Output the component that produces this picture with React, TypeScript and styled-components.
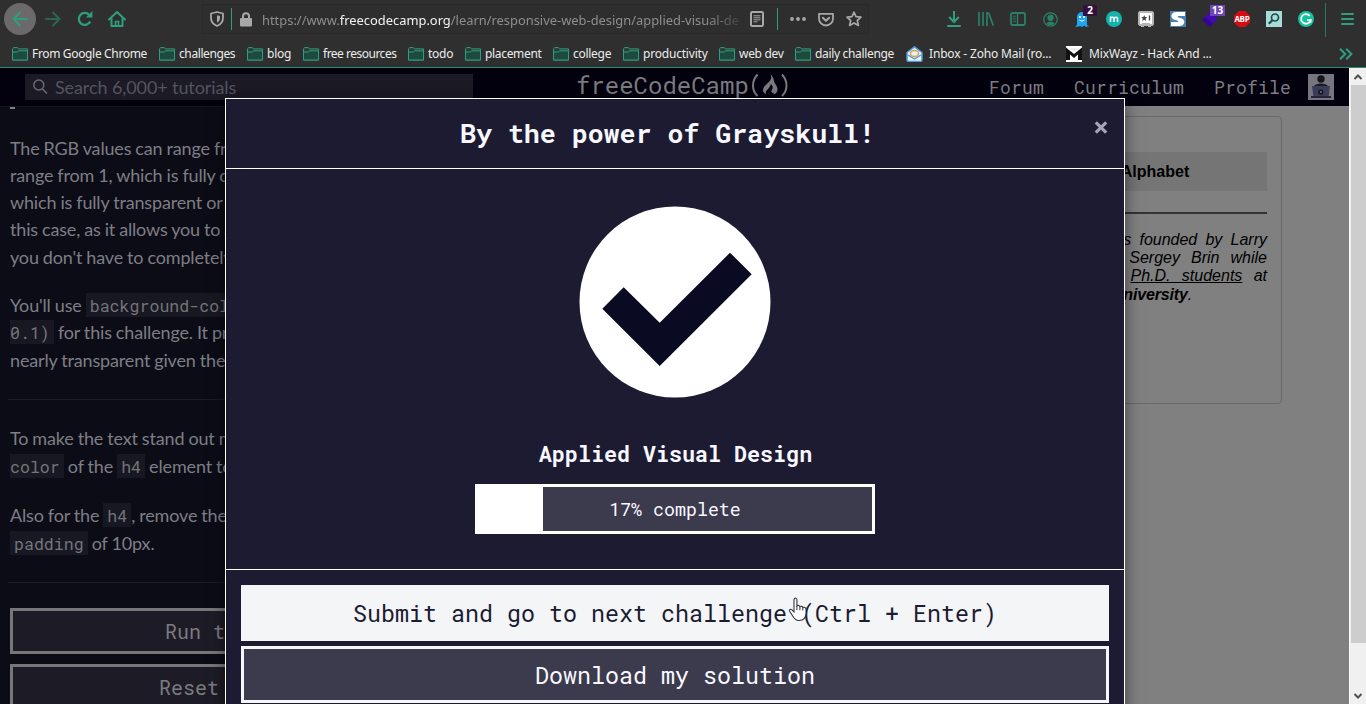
import React from 'react';
import styled, { createGlobalStyle, css } from 'styled-components';

const mono = '"Roboto Mono", "DejaVu Sans Mono", "Liberation Mono", monospace';
const ui = '"Noto Sans", "Open Sans", sans-serif';
const teal = '#2f9e7f';

const Global = createGlobalStyle`
  * { box-sizing: border-box; }
  body { margin: 0; background: #050511; }
`;

const Screen = styled.div`
  position: relative;
  width: 1366px;
  height: 704px;
  overflow: hidden;
  display: flex;
  flex-direction: column;
`;

/* ---------- browser chrome ---------- */
const Chrome = styled.header`
  height: 68px;
  flex: none;
  background: #2f2f2f;
  border-bottom: 1px solid #2c8a72;
  font-family: ${ui};
`;
const NavRow = styled.div`
  display: flex;
  align-items: center;
  height: 38px;
`;
const Slot = styled.div<{ $dim?: boolean }>`
  position: relative;
  width: 32px;
  height: 38px;
  flex: none;
  display: flex;
  align-items: center;
  justify-content: center;
  color: ${p => (p.$dim ? '#2b8069' : teal)};
  svg { display: block; }
`;
const BackButton = styled.div`
  width: 32px;
  height: 32px;
  margin: 0 1px 0 4px;
  border-radius: 50%;
  background: #6b6969;
  display: flex;
  align-items: center;
  justify-content: center;
`;
const UrlBar = styled.div`
  width: 667px;
  height: 30px;
  margin-left: 69px;
  border: 1px solid #2a2a2a;
  background: #2e2e2e;
  display: flex;
  align-items: center;
  color: #a3a3a3;
`;
const UrlIcon = styled.div<{ $w: number }>`
  width: ${p => p.$w}px;
  flex: none;
  display: flex;
  justify-content: center;
`;
const UrlDivider = styled.i`
  width: 1px;
  height: 22px;
  flex: none;
  background: ${teal};
`;
const UrlText = styled.div`
  width: 485px;
  margin-left: 3px;
  flex: none;
  white-space: nowrap;
  font-size: 12.9px;
  line-height: 20px;
  padding-top: 1px;
  color: #8e8e8e;
  mask-image: linear-gradient(to right, #000 445px, transparent 486px);
  b { font-weight: 400; color: #f2f2f2; }
`;
const Tools = styled.div`
  display: flex;
  margin-left: 69px;
`;
const Badge = styled.span<{ $bg: string; $x: number; $w: number }>`
  position: absolute;
  top: 5px;
  left: ${p => p.$x}px;
  width: ${p => p.$w}px;
  height: 11px;
  background: ${p => p.$bg};
  color: #fff;
  font: 700 10px/11px ${ui};
  text-align: center;
`;
const MenuDivider = styled.i`
  width: 1px;
  height: 34px;
  margin: 2px 5px 0 3px;
  background: #257a63;
`;
const Bookmarks = styled.div`
  display: flex;
  align-items: center;
  height: 29px;
  padding: 2px 0 0 12px;
`;
const Bookmark = styled.div<{ $w: number; $gap?: number; $ls?: number }>`
  width: ${p => p.$w}px;
  flex: none;
  display: flex;
  align-items: center;
  gap: ${p => p.$gap ?? 4}px;
  color: #ececec;
  font-size: 12px;
  line-height: 18px;
  letter-spacing: ${p => p.$ls ?? 0}px;
  white-space: nowrap;
  svg { flex: none; }
`;
const More = styled.div`
  width: 16px;
  margin-left: 127px;
`;

/* ---------- page ---------- */
const Viewport = styled.div`
  display: flex;
  flex: 1;
  min-height: 0;
`;
const Page = styled.div`
  width: 1349px;
  display: flex;
  flex-direction: column;
  background: #050511;
`;
const SiteNav = styled.nav`
  height: 38px;
  flex: none;
  display: flex;
  align-items: center;
  background: #03010e;
`;
const Search = styled.div`
  width: 448px;
  height: 26px;
  margin-left: 25px;
  padding-left: 7px;
  display: flex;
  align-items: center;
  gap: 7px;
  background: #1b1a25;
  color: #54545e;
  font: 18px/26px Lato, sans-serif;
  letter-spacing: -0.1px;
`;
const Brand = styled.div`
  width: 214px;
  margin-left: 103px;
  padding-bottom: 5px;
  display: flex;
  align-items: center;
  color: #7b7b80;
  font: 24px/30px ${mono};
  letter-spacing: 0;
`;
const BrandMark = styled.svg`
  flex: none;
  margin-left: 1px;
`;
const NavLinks = styled.div`
  display: flex;
  gap: 30px;
  margin-left: 199px;
  color: #7d7d84;
  font: 18px/26px ${mono};
  letter-spacing: 0.2px;
`;
const Avatar = styled.div`
  margin-left: 17px;
  width: 26px;
  height: 26px;
`;
const Split = styled.div`
  flex: 1;
  min-height: 0;
  display: flex;
`;
const Lesson = styled.section`
  width: 486px;
  flex: none;
  padding: 0 10px;
  background: #0c0c17;
  border-top: 1px solid #13131d;
  overflow: hidden;
  color: #7e7e84;
  font: 18px/27.3px Lato, sans-serif;
  letter-spacing: -0.16px;
  word-spacing: -0.4px;
  white-space: nowrap;
`;
const Para = styled.p<{ $loose?: boolean }>`
  margin: 0 0 21px;
  ${p => p.$loose && css`line-height: 28px;`}
`;
const Tail = styled.i`
  display: block;
  width: 5px;
  height: 2px;
  margin-bottom: 25.5px;
  background: #7e7e84;
`;
const Code = styled.code<{ $flush?: boolean }>`
  padding: 2px 4px 1px;
  ${p => p.$flush && css`padding-left: 0;`}
  background: #181822;
  color: #74747a;
  font: 16.6px/1 ${mono};
  letter-spacing: 0;
  word-spacing: 0;
`;
const Rule = styled.hr<{ $first?: boolean }>`
  height: 1px;
  margin: ${p => (p.$first ? '25.3px 0 24px -2px' : '25px 0 25px -2px')};
  border: 0;
  background: #1c1c27;
`;
const LessonButton = styled.button`
  display: block;
  width: 466px;
  height: 46px;
  margin-bottom: 10px;
  padding: 0;
  border: 3px solid #77777b;
  background: #1d1c26;
  color: #7b7b80;
  font: 20px/38px ${mono};
`;
const Preview = styled.section`
  flex: 1;
  display: flex;
  justify-content: flex-end;
  padding: 10px 67px 0 0;
  background: #808080;
`;
const Card = styled.div`
  width: 254px;
  height: 288px;
  padding: 35px 14px 0;
  border: 1px solid #696969;
  border-radius: 4px;
  color: #000;
  font: 16px/18px "Liberation Sans", sans-serif;
`;
const CardTitle = styled.h4`
  height: 39px;
  margin: 0 0 21px;
  background: #757575;
  font: 700 16px/39px "Liberation Sans", sans-serif;
  text-align: center;
`;
const CardRule = styled.div`
  height: 2px;
  margin-bottom: 17px;
  background: #333;
`;
const CardLine = styled.div<{ $last?: boolean }>`
  font-style: italic;
  white-space: nowrap;
  text-align-last: ${p => (p.$last ? 'left' : 'justify')};
  padding-top: ${p => (p.$last ? 1 : 0)}px;
  letter-spacing: ${p => (p.$last ? -0.15 : 0)}px;
`;
const Scrollbar = styled.div`
  width: 17px;
  display: flex;
  flex-direction: column;
  align-items: center;
  background: #f0f0f0;
  border-left: 1px solid #fafafa;
`;
const Arrow = styled.svg`
  flex: none;
  width: 16px;
  height: 17px;
`;
const Thumb = styled.div`
  width: 15px;
  height: 558px;
  margin-bottom: auto;
  background: #cdcdcd;
`;

/* ---------- dialog ---------- */
const Dialog = styled.div`
  position: absolute;
  top: 98px;
  left: 225px;
  width: 900px;
  height: 640px;
  border: 1px solid #fff;
  background: #1d1b32;
  box-shadow: 0 5px 15px rgba(0, 0, 0, 0.5);
  color: #f8f8ff;
  font-family: ${mono};
`;
const DialogHead = styled.div`
  height: 70px;
  display: flex;
  align-items: center;
  padding: 0 16px 0 15px;
  border-bottom: 1px solid #fff;
`;
const DialogTitle = styled.h2`
  flex: 1;
  margin: 0 0 2px;
  text-align: center;
  font: 700 26.6px/36px ${mono};
`;
const CloseIcon = styled.svg`
  flex: none;
  margin-bottom: 12px;
`;
const DialogBody = styled.div`
  height: 401px;
  padding-top: 37px;
  display: flex;
  flex-direction: column;
  align-items: center;
  border-bottom: 1px solid #fff;
`;
const BlockName = styled.div`
  margin: 42px 0 16px;
  padding-left: 1px;
  font: 700 21.7px/28px ${mono};
`;
const Progress = styled.div`
  position: relative;
  width: 400px;
  height: 50px;
  box-shadow: inset 0 0 0 3px #fff;
  background: #3c3a4d;
  font-size: 18.3px;
  line-height: 50px;
  text-align: center;
`;
const ProgressFill = styled.div`
  position: absolute;
  inset: 0 auto 0 0;
  background: #fff;
`;
const DialogFoot = styled.div`
  padding: 15px;
  display: flex;
  flex-direction: column;
  gap: 5px;
`;
const Action = styled.button<{ $active?: boolean }>`
  height: ${p => (p.$active ? 56 : 57)}px;
  padding: 0;
  border: 3px solid ${p => (p.$active ? '#f4f5f7' : '#f6f6fc')};
  background: ${p => (p.$active ? '#f4f5f7' : '#3c3a4d')};
  color: ${p => (p.$active ? '#1b1b32' : '#f8f8ff')};
  font: 23.33px/50px ${mono};
`;
const Pointer = styled.svg`
  position: absolute;
  left: 788px;
  top: 597px;
`;

const Folder = () => (
  <svg width="16" height="14" viewBox="0 0 16 14" fill="#1d4a3e" stroke="#2f9e7f" strokeWidth="1">
    <path d="M.5 13V1.8L1.8.6h3.4l1.5 1.3h8.8V13z" fill="#2a3d37" />
    <path d="M.5 13V5h4.7l1.5-1.2h8.8V13z" />
  </svg>
);

const folders: [string, number, number][] = [
  ['From Google Chrome', 147, -0.34],
  ['challenges', 88, -0.4],
  ['blog', 56, -0.25],
  ['free resources', 105, -0.5],
  ['todo', 57, -0.25],
  ['placement', 88, -0.33],
  ['college', 70, -0.28],
  ['productivity', 96, -0.2],
  ['web dev', 76, -0.3],
  ['daily challenge', 111, -0.33],
];

const s = { fill: 'none', stroke: 'currentColor', strokeWidth: 2 } as const;

const BrowserChrome = () => (
  <Chrome>
    <NavRow>
      <BackButton>
        <svg width="16" height="16" viewBox="0 0 16 16" fill="none" stroke={teal} strokeWidth="2" strokeLinecap="round"><path d="M15 8H1.5M8 1.5 1.5 8 8 14.5" /></svg>
      </BackButton>
      <Slot><svg width="16" height="16" viewBox="0 0 16 16" fill="none" stroke="#2b6654" strokeWidth="2" strokeLinecap="round"><path d="M1 8h13.5M8 1.5 14.5 8 8 14.5" /></svg></Slot>
      <Slot><svg width="16" height="16" viewBox="0 0 16 16" {...s} strokeWidth={2.3}><path d="M13.2 10.6A6 6 0 1 1 12 3.6" /><path d="M15.4 0v6.6H8.8z" fill="currentColor" stroke="none" /></svg></Slot>
      <Slot><svg width="18" height="16" viewBox="0 0 18 16" {...s}><path d="M1 8.5 9 1l8 7.5M3.5 7v8h11V7" strokeLinecap="round" strokeLinejoin="round" /><path d="M7.5 15v-4.5h3V15" strokeWidth="1.6" /></svg></Slot>
      <UrlBar>
        <UrlIcon $w={28}><svg width="14" height="16" viewBox="0 0 14 16" fill="none" stroke="#a8a8a8" strokeWidth="1.8"><path d="M7 1 13 2.5V7c0 4-2.5 6.5-6 8-3.5-1.5-6-4-6-8V2.5z" strokeLinejoin="round" /><path d="M7 4.2v7.6C9 10.5 10 9 10 7V4.9z" fill="#a8a8a8" stroke="none" /></svg></UrlIcon>
        <UrlDivider />
        <UrlIcon $w={27}><svg width="12" height="15" viewBox="0 0 12 15"><rect y="6" width="12" height="8.5" rx="1" fill="#a8a8a8" /><path d="M3 7V4.2a3 3 0 0 1 6 0V7" fill="none" stroke="#a8a8a8" strokeWidth="2" /></svg></UrlIcon>
        <UrlText>https://www.<b>freecodecamp.org</b>/learn/responsive-web-design/applied-visual-de</UrlText>
        <UrlIcon $w={20}><svg width="14" height="16" viewBox="0 0 14 16" fill="none" stroke="#a8a8a8"><rect x="1" y="1" width="12" height="14" rx="1.2" strokeWidth="2" /><path d="M3.5 4.8h7M3.5 6.8h7M3.5 8.8h7M3.5 10.8h4" strokeWidth="1" /></svg></UrlIcon>
        <UrlIcon $w={20}><UrlDivider /></UrlIcon>
        <UrlIcon $w={22}><svg width="16" height="4" viewBox="0 0 16 4" fill="#a8a8a8"><circle cx="2" cy="2" r="1.9" /><circle cx="8" cy="2" r="1.9" /><circle cx="14" cy="2" r="1.9" /></svg></UrlIcon>
        <UrlIcon $w={34}><svg width="16" height="15" viewBox="0 0 16 15" fill="none" stroke="#a8a8a8" strokeWidth="1.8" strokeLinecap="round" strokeLinejoin="round"><path d="M1 1.8h14V6.5a7 7 0 0 1-14 0z" /><path d="M4.8 5.8 8 8.8l3.2-3" strokeWidth="2" /></svg></UrlIcon>
        <UrlIcon $w={22}><svg width="16" height="16" viewBox="0 0 16 16" fill="none" stroke="#a8a8a8" strokeWidth="1.7" strokeLinejoin="round"><path d="m8 1.2 2 4.5 5 .5-3.7 3.3 1.1 4.9L8 11.9l-4.4 2.5 1.1-4.9L1 6.2l5-.5z" /></svg></UrlIcon>
      </UrlBar>
      <Tools>
        <Slot><svg width="14" height="16" viewBox="0 0 14 16" {...s}><path d="M7 0v10.5M2.2 6 7 11l4.8-5" /><path d="M1 15h12" strokeLinecap="round" /></svg></Slot>
        <Slot $dim><svg width="16" height="14" viewBox="0 0 16 14" {...s}><path d="M1 0v14M5 0v14M9 0v14M10.5.5 15.3 13.6" strokeWidth="1.7" /></svg></Slot>
        <Slot $dim><svg width="16" height="14" viewBox="0 0 16 14" {...s}><rect x="1" y="1" width="14" height="12" rx="1.5" strokeWidth="1.8" /><path d="M7.5 1v12" strokeWidth="1.4" /><path d="M2.8 4.2h3M2.8 6.7h3M2.8 9.2h3" strokeWidth="1.1" /></svg></Slot>
        <Slot $dim><svg width="15" height="15" viewBox="0 0 15 15" {...s} strokeWidth={1.2}><circle cx="7.5" cy="7.5" r="6.7" /><circle cx="7.5" cy="5.8" r="2.6" fill="currentColor" /><path d="M3.5 11.5c1-2.2 7-2.2 8 0-1.8 2-6.2 2-8 0z" fill="currentColor" stroke="none" /></svg></Slot>
        <Slot>
          <svg width="14" height="16" viewBox="0 0 14 16"><path d="M2 14V6a5 5 0 0 1 10 0v8l2 1.2-3 .6-2-1-2 1.1-2-1-2 .9-3-.4z" fill="#1fa5ee" /><circle cx="5" cy="6" r="1.1" fill="#fff" /><circle cx="9" cy="6" r="1.1" fill="#fff" /><path d="M4.5 9q2.5 2.4 5 0" fill="none" stroke="#fff" /></svg>
          <Badge $bg="#35103f" $x={17} $w={14}>2</Badge>
        </Slot>
        <Slot><svg width="16" height="16" viewBox="0 0 16 16"><circle cx="8" cy="8" r="8" fill="#16b3ac" /><path d="M4.5 11V5.4M4.5 7.6c.4-1.900 3.500-1.900 3.500.2V11M8 7.600c.4-1.900 3.500-1.900 3.500.2V11" fill="none" stroke="#fff" strokeWidth="1.5" /></svg></Slot>
        <Slot><svg width="16" height="16" viewBox="0 0 16 16"><path d="M1.5 0h13L16 1.5v12L14.5 15H13v1h-3v-1H6v1H3v-1H1.5L0 13.5v-12z" fill="#b4b4b4" /><path d="M2 2h12v11h-1.5l-1-1h-7l-1 1H2z" fill="#fff" /><path d="m6.2 4 .9 2.1 2.2.2-1.7 1.4.6 2.2-2-1.2-2 1.2.6-2.2-1.600-1.400 2.200-.2z" fill="#444" /><path d="M11.5 4.5v5" stroke="#444" strokeWidth="1.3" /></svg></Slot>
        <Slot><svg width="16" height="16" viewBox="0 0 16 16"><rect width="16" height="16" fill="#4a7fae" /><path d="M15 1H6.5C0 1 0 8 5 9c4 .6 4 2 2 2H1v4h8c6.500 0 7-7 1.500-8C7 6.500 7 5 9 5h6z" fill="#fff" /></svg></Slot>
        <Slot>
          <svg width="16" height="16" viewBox="0 0 16 16"><path d="m8 1 8 6.5L8 16 0 9z" fill="#4309b3" /><path d="m0 9 3-2.5 8 6.300L8 16z" fill="#33078e" /></svg>
          <Badge $bg="#6c45b8" $x={16} $w={15}>13</Badge>
        </Slot>
        <Slot><svg width="16" height="16" viewBox="0 0 16 16"><path d="M4.7 0h6.6L16 4.7v6.6L11.3 16H4.7L0 11.3V4.7z" fill="#d50d12" /><text x="7.9" y="11" textAnchor="middle" fontFamily="Open Sans, sans-serif" fontWeight="700" fontSize="8" letterSpacing="-.3" fill="#fff">ABP</text></svg></Slot>
        <Slot><svg width="16" height="16" viewBox="0 0 16 16"><rect width="16" height="16" fill="#a5dcd5" /><circle cx="9" cy="6.5" r="3.5" fill="none" stroke="#1d4b52" strokeWidth="1.7" /><path d="m6.3 9.2-3.5 3.6" stroke="#1d4b52" strokeWidth="2.2" /></svg></Slot>
        <Slot><svg width="16" height="16" viewBox="0 0 16 16"><circle cx="8" cy="8" r="8" fill="#15c39a" /><path d="M11.8 5A4.8 4.8 0 1 0 12.6 9H9" fill="none" stroke="#fff" strokeWidth="1.7" /><path d="M12.8 8.2v3.600" stroke="#fff" strokeWidth="1.3" /></svg></Slot>
      </Tools>
      <MenuDivider />
      <Slot><svg width="13" height="12" viewBox="0 0 13 12" {...s} strokeLinecap="round"><path d="M1 1h11M1 6h11M1 11h11" /></svg></Slot>
    </NavRow>
    <Bookmarks>
      {folders.map(([name, w, ls]) => (
        <Bookmark key={name} $w={w} $ls={ls}><Folder />{name}</Bookmark>
      ))}
      <Bookmark $w={160} $gap={6} $ls={-0.17}>
        <svg width="17" height="16" viewBox="0 0 17 16"><path d="M1 6.5 8.5.8 16 6.5V14a1.5 1.5 0 0 1-1.5 1.5h-12A1.5 1.5 0 0 1 1 14z" fill="#e8f2fb" stroke="#4f97d6" strokeWidth="1.5" /><ellipse cx="8.5" cy="7.5" rx="4" ry="3" fill="none" stroke="#d5a54b" strokeWidth="1.5" /><path d="m2 9 6.500 4L15 9" fill="none" stroke="#4f97d6" strokeWidth="1.3" /></svg>
        Inbox - Zoho Mail (ro...
      </Bookmark>
      <Bookmark $w={146} $gap={7} $ls={-0.15}>
        <svg width="16" height="16" viewBox="0 0 16 16"><rect width="16" height="16" fill="#fff" /><path d="M0 1.5 3 4l5 4 5-4 3-2.5V14h-4V8.5L8 12 4 8.5V14H0z" fill="#111" /><path d="m3 2 5 4.500L13 2z" fill="#eee" /></svg>
        MixWayz - Hack And ...
      </Bookmark>
      <More><svg width="14" height="12" viewBox="0 0 14 12" fill="none" stroke={teal} strokeWidth="2"><path d="m1 .8 5.200 5.200L1 11.200M7.200.8l5.200 5.200-5.200 5.200" /></svg></More>
    </Bookmarks>
  </Chrome>
);

export default function App() {
  const percent = 17;
  return (
    <Screen>
      <Global />
      <BrowserChrome />
      <Viewport>
        <Page>
          <SiteNav>
            <Search>
              <svg width="16" height="16" viewBox="0 0 16 16" fill="none" stroke="#6a6a73" strokeWidth="1.5"><circle cx="6.8" cy="6" r="5" /><path d="m10.3 9.7 4.7 4.8" /></svg>
              Search 6,000+ tutorials
            </Search>
            <Brand>
              freeCodeCamp
              <BrandMark width="40" height="24" viewBox="0 0 40 24">
                <path d="M7.500 1.500C1.500 8 1.500 17 7.500 23M32 1.500c6 6.500 6 15.500 0 21.500" fill="none" stroke="#7b7b80" strokeWidth="2" />
                <path transform="translate(1 0)" d="M19.500 1.500c2 4-.5 6.500-3 8.800C14 12.700 12 14.500 12 17c0 2 1.200 3.500 3 4.200-.8-2 .3-3.700 2-5.200 1.200-1.200 2.500-2.800 2.800-5 2.700 2.300 2.200 4.500.2 7.500l3.500 2.700c2-1 3-2.700 3-5 0-3.500-2.700-5-3.500-8-.3-2.700-1.300-5.200-3.500-6.700z" fill="#7b7b80" />
              </BrandMark>
            </Brand>
            <NavLinks><span>Forum</span><span>Curriculum</span><span>Profile</span></NavLinks>
            <Avatar>
              <svg width="26" height="26" viewBox="0 0 26 26"><rect width="26" height="26" fill="#77767e" /><circle cx="13" cy="5" r="3.7" fill="#15151d" /><path d="M6 12c2-3.500 12-3.500 14 0l.5 3h-15z" fill="#1b1b28" /><path d="M4 12h18l-1.500 11h-15z" fill="#3b3c5a" /><path d="M3 22h20v2H3z" fill="#24243a" /><circle cx="12.8" cy="18" r="2.6" fill="#14141f" /><circle cx="12.8" cy="18" r="1" fill="#77767e" /></svg>
            </Avatar>
          </SiteNav>
          <Split>
            <Lesson>
              <Tail />
              <Para>The RGB values can range from 0 to 255. The alpha value can<br />range from 1, which is fully opaque or a solid color, to 0,<br />which is fully transparent or clear. This is great to use in<br />this case, as it allows you to adjust the opacity. This means<br />you don't have to completely block out the background.</Para>
              <Para>You'll use <Code>background-color: rgba(45, 45, 45,</Code><br /><Code $flush>0.1)</Code> for this challenge. It produces a dark gray that is<br />nearly transparent given the low opacity value of 0.1.</Para>
              <Rule $first />
              <Para $loose>To make the text stand out more, change the background<br /><Code $flush>color</Code> of the <Code>h4</Code> element to the given color.</Para>
              <Para $loose>Also for the <Code>h4</Code>, remove the height and add<br /><Code>padding</Code> of 10px.</Para>
              <Rule />
              <LessonButton>Run the Tests</LessonButton>
              <LessonButton>Reset All Code</LessonButton>
            </Lesson>
            <Preview>
              <Card>
                <CardTitle>Alphabet</CardTitle>
                <CardRule />
                <CardLine>Google was founded by Larry</CardLine>
                <CardLine>Page and Sergey Brin while</CardLine>
                <CardLine>they were <u>Ph.D. students</u> at</CardLine>
                <CardLine $last><b>Stanford University</b>.</CardLine>
              </Card>
            </Preview>
          </Split>
        </Page>
        <Scrollbar>
          <Arrow viewBox="0 0 16 17"><path d="M4.500 11 8 7.500l3.500 3.500" fill="none" stroke="#505050" strokeWidth="2" /></Arrow>
          <Thumb />
          <Arrow viewBox="0 0 16 17"><path d="M4.500 7 8 10.500 11.500 7" fill="none" stroke="#505050" strokeWidth="2" /></Arrow>
        </Scrollbar>
      </Viewport>

      <Dialog role="dialog">
        <DialogHead>
          <DialogTitle>By the power of Grayskull!</DialogTitle>
          <CloseIcon width="14" height="14" viewBox="0 0 14 14" stroke="#a5a4b5" strokeWidth="3.2"><path d="m1.800 1.300 10.400 10.400M12.200 1.300 1.800 11.700" /></CloseIcon>
        </DialogHead>
        <DialogBody>
          <svg width="192" height="192" viewBox="579 206 192 192">
            <circle cx="675" cy="302" r="95.5" fill="#fff" />
            <path d="m602.300 308.700 21.400-21.400 36 35.400 70.300-70 21.700 21.600-92 91.700z" fill="#0a0a23" />
          </svg>
          <BlockName>Applied Visual Design</BlockName>
          <Progress>
            <ProgressFill style={{ width: `${percent}%` }} />
            {percent}% complete
          </Progress>
        </DialogBody>
        <DialogFoot>
          <Action $active>Submit and go to next challenge (Ctrl + Enter)</Action>
          <Action>Download my solution</Action>
        </DialogFoot>
      </Dialog>
      <Pointer width="20" height="25" viewBox="0 0 20 25">
        <path d="M6.500 1.500c1-.8 2.400 0 2.400 1.300v6c1-.8 2.600-.4 3 .8 1-.7 2.500-.2 2.900 1 1.300-.7 3.200 0 3.200 1.800V16c0 5-3 7.500-7 7.500-3 0-4.500-1.500-6-4l-3.500-5.500c-.5-1.300 1-2.300 2.200-1.300L6 15V2.500z" fill="#fff" stroke="#33333d" strokeWidth="1.1" />
        <path d="M8.900 9v4M11.900 10v3.200M14.800 11v2.500" stroke="#33333d" strokeWidth="1" />
      </Pointer>
    </Screen>
  );
}
